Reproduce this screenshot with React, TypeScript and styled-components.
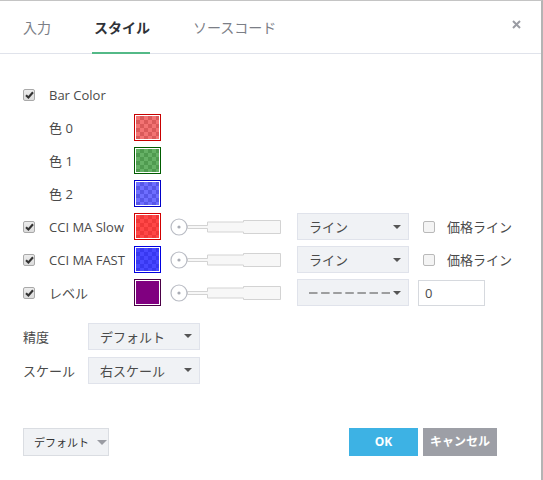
import React from 'react';
import styled, { createGlobalStyle } from 'styled-components';

const Global = createGlobalStyle`
  html, body { margin: 0; padding: 0; background: #fff; }
  body { font-family: "Open Sans", "Noto Sans CJK JP", sans-serif; color: #4a4a4a; }
  * { box-sizing: border-box; }
`;

const Dialog = styled.div`
  width: 543px;
  height: 480px;
  border-top: 1px solid #c4c4c4;
  border-right: 2px solid #b4b4b4;
  display: flex;
  flex-direction: column;
  background: #fff;
`;

const Header = styled.div`
  height: 53px;
  border-bottom: 1px solid #e0e3eb;
  display: flex;
  align-items: stretch;
  padding-left: 23px;
  gap: 43px;
`;

const Tab = styled.div<{ $active?: boolean }>`
  position: relative;
  display: flex;
  align-items: center;
  font-size: 14px;
  font-weight: ${(p) => (p.$active ? 700 : 400)};
  color: ${(p) => (p.$active ? '#2f3238' : '#7b7e86')};
  &::after {
    content: '';
    display: ${(p) => (p.$active ? 'block' : 'none')};
    position: absolute;
    left: -2px;
    right: 0;
    bottom: -1px;
    height: 2px;
    background: #53b987;
  }
`;

const Close = styled.div`
  margin-left: auto;
  margin-right: 20px;
  display: flex;
  align-items: center;
  padding-bottom: 6px;
`;

const Content = styled.div`
  padding: 24px 0 0 23px;
  display: flex;
  flex-direction: column;
`;

const Row = styled.div`
  height: 33px;
  display: flex;
  align-items: center;
`;

const CheckCell = styled.div`
  width: 26px;
  display: flex;
  align-items: center;
`;

const Box = styled.div<{ $checked?: boolean }>`
  width: 12px;
  height: 12px;
  border: 1px solid ${(p) => (p.$checked ? '#a9a9a9' : '#b9b9b9')};
  border-radius: 2px;
  background: ${(p) => (p.$checked ? 'linear-gradient(#ececec, #dcdcdc)' : '#f4f4f4')};
  display: flex;
  align-items: center;
  justify-content: center;
`;

const Label = styled.div<{ $w: number }>`
  width: ${(p) => p.$w}px;
  font-size: 13px;
  color: #4a4a4a;
  white-space: nowrap;
`;

const Swatch = styled.div<{ $border: string }>`
  width: 27px;
  height: 27px;
  border: 1px solid ${(p) => p.$border};
  padding: 1px;
  background: #fff;
`;

const SwatchFill = styled.div<{ $color: string; $solid?: boolean }>`
  width: 100%;
  height: 100%;
  background: ${(p) =>
    p.$solid
      ? p.$color
      : `linear-gradient(${p.$color}, ${p.$color}), conic-gradient(#c8c8c8 25%, #ffffff 0 50%, #c8c8c8 0 75%, #ffffff 0) 0 0 / 8px 8px`};
`;

const SliderWrap = styled.div`
  margin-left: 9px;
  width: 111px;
  height: 18px;
  display: flex;
`;

const Select = styled.div<{ $w?: number; $ml?: number }>`
  width: ${(p) => p.$w ?? 112}px;
  height: 27px;
  margin-left: ${(p) => p.$ml ?? 0}px;
  background: #f0f2f5;
  border: 1px solid #e0e3eb;
  display: flex;
  align-items: center;
  padding: 0 7px 0 11px;
  font-size: 13px;
  color: #4a4a4a;
`;

const SelectText = styled.div`
  flex: 1;
  white-space: nowrap;
  display: flex;
  align-items: center;
`;

const Arrow = styled.div<{ $color?: string; $size?: number }>`
  width: 0;
  height: 0;
  flex: none;
  border-left: ${(p) => p.$size ?? 4}px solid transparent;
  border-right: ${(p) => p.$size ?? 4}px solid transparent;
  border-top: ${(p) => p.$size ?? 4}px solid ${(p) => p.$color ?? '#555'};
`;

const PriceCheck = styled.div`
  margin-left: 14px;
  display: flex;
  align-items: center;
  gap: 12px;
  font-size: 13px;
  color: #4a4a4a;
`;

const NumInput = styled.div`
  margin-left: 9px;
  width: 67px;
  height: 26px;
  border: 1px solid #d6d9de;
  background: #fff;
  font-size: 13px;
  display: flex;
  align-items: center;
  padding-left: 6px;
  color: #4a4a4a;
`;

const Settings = styled.div`
  margin-top: 10px;
  display: flex;
  flex-direction: column;
`;

const SettingRow = styled.div`
  height: 34px;
  display: flex;
  align-items: center;
`;

const Footer = styled.div`
  margin-top: auto;
  padding: 0 44px 24px 23px;
  display: flex;
  align-items: center;
`;

const DefaultBtn = styled.div`
  width: 86px;
  height: 28px;
  background: #f0f2f5;
  border: 1px solid #dadde2;
  display: flex;
  align-items: center;
  padding-left: 10px;
  gap: 8px;
  font-size: 11px;
  color: #333;
  white-space: nowrap;
`;

const Btn = styled.div<{ $bg: string; $w: number }>`
  width: ${(p) => p.$w}px;
  height: 28px;
  background: ${(p) => p.$bg};
  color: #fff;
  font-size: 12px;
  font-weight: 700;
  display: flex;
  align-items: center;
  justify-content: center;
  padding-bottom: 2px;
`;

const Spacer = styled.div`
  flex: 1;
`;

const BtnGroup = styled.div`
  display: flex;
  gap: 5px;
`;

const CheckMark = () => (
  <svg width="9" height="8" viewBox="0 0 9 8">
    <path d="M1 4.2 L3.4 6.5 L8 1.2" stroke="#333" strokeWidth="2.1" fill="none" />
  </svg>
);

const CheckBox = ({ checked }: { checked?: boolean }) => (
  <Box $checked={checked}>{checked && <CheckMark />}</Box>
);

const Slider = () => (
  <SliderWrap>
    <svg width="111" height="18" viewBox="0 0 111 18">
      <path
        d="M17.5 7.5 H37.5 V4 H73.5 V2.5 H110.5 V15.5 H73.5 V14 H37.5 V10.5 H17.5 Z"
        fill="#f7f7f7"
        stroke="#d3d3d3"
        strokeWidth="1"
      />
      <circle cx="9" cy="9" r="8" fill="#fff" stroke="#b9bcc4" strokeWidth="1.2" />
      <circle cx="9" cy="9" r="1.6" fill="#a9acb4" />
    </svg>
  </SliderWrap>
);

const DashLine = () => (
  <svg width="81" height="4" viewBox="0 0 81 4">
    <line x1="0" y1="2" x2="81" y2="2" stroke="#4a4a4a" strokeWidth="1.2" strokeDasharray="8.5 3.6" />
  </svg>
);

const colorRows = [
  { label: '色 0', border: '#c80000', color: 'rgba(232,0,0,0.55)' },
  { label: '色 1', border: '#005c00', color: 'rgba(0,125,0,0.6)' },
  { label: '色 2', border: '#0000c8', color: 'rgba(0,0,255,0.57)' },
];

const plotRows = [
  { label: 'CCI MA Slow', border: '#d00000', color: 'rgba(255,0,0,0.72)' },
  { label: 'CCI MA FAST', border: '#0000e0', color: 'rgba(0,0,255,0.72)' },
];

export default function App() {
  return (
    <>
      <Global />
      <Dialog>
        <Header>
          <Tab>入力</Tab>
          <Tab $active>スタイル</Tab>
          <Tab>ソースコード</Tab>
          <Close>
            <svg width="9" height="9" viewBox="0 0 9 9">
              <path d="M1 1 L8 8 M8 1 L1 8" stroke="#9a9ca3" strokeWidth="2" />
            </svg>
          </Close>
        </Header>
        <Content>
          <Row>
            <CheckCell>
              <CheckBox checked />
            </CheckCell>
            <Label $w={85}>Bar Color</Label>
          </Row>
          {colorRows.map((r) => (
            <Row key={r.label}>
              <CheckCell />
              <Label $w={85}>{r.label}</Label>
              <Swatch $border={r.border}>
                <SwatchFill $color={r.color} />
              </Swatch>
            </Row>
          ))}
          {plotRows.map((r) => (
            <Row key={r.label}>
              <CheckCell>
                <CheckBox checked />
              </CheckCell>
              <Label $w={85}>{r.label}</Label>
              <Swatch $border={r.border}>
                <SwatchFill $color={r.color} />
              </Swatch>
              <Slider />
              <Select $ml={16}>
                <SelectText>ライン</SelectText>
                <Arrow />
              </Select>
              <PriceCheck>
                <CheckBox />
                価格ライン
              </PriceCheck>
            </Row>
          ))}
          <Row>
            <CheckCell>
              <CheckBox checked />
            </CheckCell>
            <Label $w={85}>レベル</Label>
            <Swatch $border="#4a0046">
              <SwatchFill $color="#800080" $solid />
            </Swatch>
            <Slider />
            <Select $ml={16}>
              <SelectText>
                <DashLine />
              </SelectText>
              <Arrow />
            </Select>
            <NumInput>0</NumInput>
          </Row>
          <Settings>
            <SettingRow>
              <Label $w={65}>精度</Label>
              <Select>
                <SelectText>デフォルト</SelectText>
                <Arrow />
              </Select>
            </SettingRow>
            <SettingRow>
              <Label $w={65}>スケール</Label>
              <Select>
                <SelectText>右スケール</SelectText>
                <Arrow />
              </Select>
            </SettingRow>
          </Settings>
        </Content>
        <Footer>
          <DefaultBtn>
            デフォルト
            <Arrow $color="#9a9ca3" $size={5} />
          </DefaultBtn>
          <Spacer />
          <BtnGroup>
            <Btn $bg="#3db2e4" $w={69}>OK</Btn>
            <Btn $bg="#9d9fa6" $w={74}>キャンセル</Btn>
          </BtnGroup>
        </Footer>
      </Dialog>
    </>
  );
}
